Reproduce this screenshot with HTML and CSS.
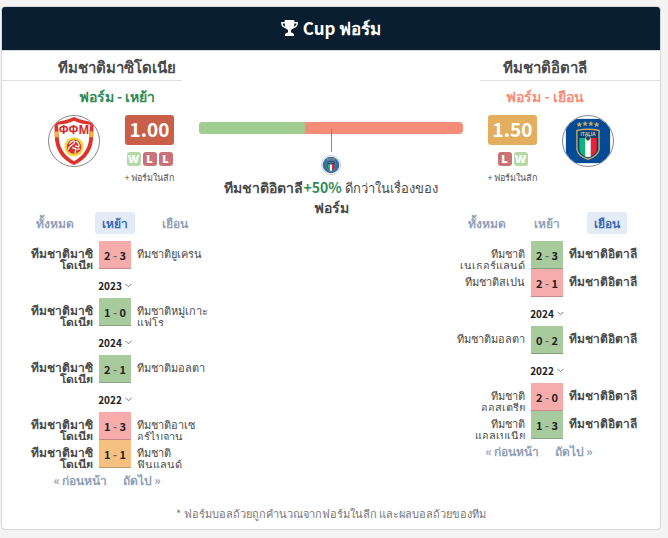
FILE: index.html
```html
<!DOCTYPE html>
<html lang="th">
  <head>
    <meta charset="utf-8">
    <title>Cup ฟอร์ม</title>
    <link rel="stylesheet" href="styles.css">
  </head>
  <body>
    <svg class="defs" width="0" height="0">
      <symbol id="chevron" viewBox="0 0 7 5">
        <path d="M0.5 0.8 L3.5 3.8 L6.5 0.8" fill="none" stroke="currentColor"/>
      </symbol>
      <symbol id="crest-italy" viewBox="0 0 52 52">
        <g fill="#c3a868">
          <path id="star" d="M17 6l.9 1.900 2 .2-1.500 1.400.4 2-1.800-1-1.800 1 .4-2-1.500-1.400 2-.2z"/>
          <use href="#star" x="6" y="-1"/>
          <use href="#star" x="12" y="-1"/>
          <use href="#star" x="18"/>
        </g>
        <path d="M14.500 15 Q26 12.500 37.500 15 V35 Q36 42 26 45 Q16 42 14.500 35 Z" fill="#0a3c78" stroke="#c3a868" stroke-width="1.500"/>
        <path d="M17 23h6v19q-5-2-6-7z" fill="#12b27c"/>
        <path d="M23 23h6v19l-3 1-3-1z" fill="#fff"/>
        <path d="M29 23h6v12q-1 5-6 7z" fill="#ee2038"/>
        <circle cx="26" cy="23" r="2.500" fill="#0a3c78" stroke="#c3a868"/>
        <text class="crest-text" x="26" y="20.500" fill="#dfca94">ITALIA</text>
      </symbol>
    </svg>

    <div class="card">
      <h2 class="card-title">
        <svg class="trophy" viewBox="0 0 17 16">
          <path d="M3.700 0h9.600v3.500q0 5-3.300 6.400V12q0 .6 1 .8Q13 13 13 15v1H4v-1q0-2 2-2.200 1-.2 1-.8V9.900Q3.700 8.500 3.700 3.500z" fill="#fff"/>
          <path d="M4 2.700H.8Q.6 7 6 8M13 2.700h3.200Q16.400 7 11 8" fill="none" stroke="#fff" stroke-width="1.400"/>
        </svg>
        Cup ฟอร์ม
      </h2>

      <div class="compare">
        <div class="team home">
          <h3 class="team-name">ทีมชาติมาซิโดเนีย</h3>
          <p class="team-side green">ฟอร์ม - เหย้า</p>
          <div class="team-summary">
            <svg class="crest" viewBox="0 0 52 52">
              <path d="M5 6Q15 6 26 1Q37 6 47 6Q46 12 46 20Q46 42 26 51Q6 42 6 20Q6 12 5 6Z" fill="#e0322c"/>
              <path d="M9 9Q17 9 26 5Q35 9 43 9Q42 14 42 20Q42 38 26 47Q10 38 10 20Q10 14 9 9Z" fill="#fff"/>
              <path d="M6 16h4v6H6zM42 16h4v6h-4z" fill="#f4b23c"/>
              <text class="crest-mark" x="26" y="19" fill="#d42a2a">ФФМ</text>
              <circle cx="26" cy="32" r="10" fill="#fbd43c"/>
              <circle cx="26" cy="32" r="7.500" fill="#d9362b"/>
              <path d="M21 29q3-4 5-3t-2 4-4 5M28 26q4 3 3 6l-4-1M24 33l4 1-1 5M29 35l3-1" fill="none" stroke="#fff" stroke-width="1.300"/>
            </svg>
            <div class="rating">
              <span class="rating-value red">1.00</span>
              <div class="results">
                <span class="result win">W</span>
                <span class="result loss">L</span>
                <span class="result loss">L</span>
              </div>
              <a class="league-link" href="#">+ ฟอร์มในลีก</a>
            </div>
          </div>
        </div>

        <div class="versus">
          <div class="bar"><div class="bar-home" style="width: 40%"></div></div>
          <div class="pointer"></div>
          <svg class="mini-crest" viewBox="0 0 52 52">
            <circle cx="26" cy="26" r="24" fill="#2f6dab"/>
            <use href="#crest-italy"/>
          </svg>
          <p class="verdict"><b>ทีมชาติอิตาลี<span class="green">+50%</span></b> ดีกว่าในเรื่องของ<br><b>ฟอร์ม</b></p>
        </div>

        <div class="team away">
          <h3 class="team-name">ทีมชาติอิตาลี</h3>
          <p class="team-side coral">ฟอร์ม - เยือน</p>
          <div class="team-summary">
            <div class="rating">
              <span class="rating-value amber">1.50</span>
              <div class="results">
                <span class="result loss">L</span>
                <span class="result win">W</span>
              </div>
              <a class="league-link" href="#">+ ฟอร์มในลีก</a>
            </div>
            <svg class="crest" viewBox="0 0 52 52">
              <rect x="3" y="3" width="46" height="46" fill="#034a97"/>
              <use href="#crest-italy"/>
            </svg>
          </div>
        </div>

        <div class="history home-history">
          <div class="tabs">
            <button class="tab">ทั้งหมด</button>
            <button class="tab active">เหย้า</button>
            <button class="tab">เยือน</button>
          </div>
          <div class="match"><b>ทีมชาติมาซิ<br>โดเนีย</b><span class="score lost">2 <i>-</i> 3</span><span>ทีมชาติยูเครน</span></div>
          <button class="year">2023 <svg><use href="#chevron"/></svg></button>
          <div class="match"><b>ทีมชาติมาซิ<br>โดเนีย</b><span class="score won">1 <i>-</i> 0</span><span>ทีมชาติหมู่เกาะ<br>แฟโร</span></div>
          <button class="year">2024 <svg><use href="#chevron"/></svg></button>
          <div class="match"><b>ทีมชาติมาซิ<br>โดเนีย</b><span class="score won">2 <i>-</i> 1</span><span>ทีมชาติมอลตา</span></div>
          <button class="year">2022 <svg><use href="#chevron"/></svg></button>
          <div class="match"><b>ทีมชาติมาซิ<br>โดเนีย</b><span class="score lost">1 <i>-</i> 3</span><span>ทีมชาติอาเซ<br>อร์ไบจาน</span></div>
          <div class="match"><b>ทีมชาติมาซิ<br>โดเนีย</b><span class="score drawn">1 <i>-</i> 1</span><span>ทีมชาติ<br>ฟินแลนด์</span></div>
          <div class="pager">
            <button>« ก่อนหน้า</button>
            <button>ถัดไป »</button>
          </div>
        </div>

        <div class="history away-history">
          <div class="tabs">
            <button class="tab">ทั้งหมด</button>
            <button class="tab">เหย้า</button>
            <button class="tab active">เยือน</button>
          </div>
          <div class="match"><span>ทีมชาติ<br>เนเธอร์แลนด์</span><span class="score won">2 <i>-</i> 3</span><b>ทีมชาติอิตาลี</b></div>
          <div class="match"><span>ทีมชาติสเปน</span><span class="score lost">2 <i>-</i> 1</span><b>ทีมชาติอิตาลี</b></div>
          <button class="year">2024 <svg><use href="#chevron"/></svg></button>
          <div class="match"><span>ทีมชาติมอลตา</span><span class="score won">0 <i>-</i> 2</span><b>ทีมชาติอิตาลี</b></div>
          <button class="year">2022 <svg><use href="#chevron"/></svg></button>
          <div class="match"><span>ทีมชาติ<br>ออสเตรีย</span><span class="score lost">2 <i>-</i> 0</span><b>ทีมชาติอิตาลี</b></div>
          <div class="match"><span>ทีมชาติ<br>แอลเบเนีย</span><span class="score won">1 <i>-</i> 3</span><b>ทีมชาติอิตาลี</b></div>
          <div class="pager">
            <button>« ก่อนหน้า</button>
            <button>ถัดไป »</button>
          </div>
        </div>
      </div>

      <p class="note">* ฟอร์มบอลถ้วยถูกคำนวณจากฟอร์มในลีก และผลบอลถ้วยของทีม</p>
    </div>
  </body>
</html>
```

FILE: styles.css
```css
* {
  box-sizing: border-box;
}

body {
  margin: 0;
  padding: 6px 7px 8px 1px;
  background: #f3f3f3;
  color: #4a4a4a;
  font-family: "Noto Sans CJK JP", "Noto Sans", sans-serif;
  font-size: 12px;
}

h2, h3, p {
  margin: 0;
}

button {
  padding: 0;
  border: 0;
  background: none;
  color: inherit;
  font: inherit;
  cursor: pointer;
}

.defs {
  position: absolute;
}

.card {
  border: 1px solid #d6d8da;
  border-radius: 4px;
  background: #fff;
  overflow: hidden;
}

.card-title {
  display: flex;
  align-items: center;
  justify-content: center;
  gap: 5px;
  height: 44px;
  padding-bottom: 2px;
  border-bottom: 1px solid #d6dade;
  background: #091e31;
  color: #fff;
  font-size: 17px;
  line-height: 24px;
}

.trophy {
  width: 17px;
  height: 16px;
}

.compare {
  display: grid;
  grid-template-columns: 180px 46px 1fr 46px 180px;
  grid-template-rows: 161px auto;
}

.team {
  text-align: center;
}

.home {
  grid-area: 1 / 1;
}

.away {
  grid-area: 1 / 5;
}

.team-name {
  height: 30px;
  border-bottom: 1px solid #e0e0e0;
  font-size: 15px;
  line-height: 32px;
}

.team-side {
  height: 34px;
  font-size: 14px;
  font-weight: bold;
  line-height: 30px;
}

.home .team-name,
.home .team-side {
  padding-left: 50px;
}

.away .team-name,
.away .team-side {
  padding-right: 50px;
}

.green {
  color: #2e8b57;
}

.coral {
  color: #f68d78;
}

.team-summary {
  display: flex;
  gap: 20px;
}

.home .team-summary {
  justify-content: flex-end;
  padding-right: 3px;
}

.away .team-summary {
  padding-left: 3px;
}

.crest {
  width: 52px;
  height: 52px;
  border: 1px solid #888;
  border-radius: 50%;
}

.crest-text {
  font: bold 5px "Open Sans", sans-serif;
  text-anchor: middle;
}

.crest-mark {
  font: bold 12px "Open Sans", sans-serif;
  text-anchor: middle;
}

.rating {
  display: flex;
  flex-direction: column;
  align-items: center;
  width: 59px;
}

.rating-value {
  width: 49px;
  height: 30px;
  border-radius: 3px;
  color: #fff;
  font-size: 19px;
  font-weight: bold;
  line-height: 28px;
}

.red {
  background: #c95f49;
}

.amber {
  background: #e3ae5e;
}

.results {
  display: flex;
  gap: 2px;
  margin: 7px 0 4px;
}

.result {
  width: 14px;
  border-radius: 3px;
  color: #fff;
  font-family: "Open Sans", sans-serif;
  font-size: 11px;
  font-weight: 800;
  line-height: 14px;
}

.win {
  background: #b3d8a4;
}

.loss {
  background: #c97376;
}

.league-link {
  color: #555;
  font-size: 9px;
  line-height: 16px;
  text-decoration: none;
  white-space: nowrap;
}

.versus {
  display: flex;
  flex-direction: column;
  align-items: center;
  grid-area: 1 / 2 / 3 / 5;
  align-self: start;
  padding: 71px 17px 0;
}

.bar {
  width: 100%;
  height: 12px;
  border-radius: 4px;
  background: #f68d78;
  overflow: hidden;
}

.bar-home {
  height: 100%;
  background: #a2cd90;
}

.pointer {
  width: 1px;
  height: 23px;
  margin-top: -5px;
  background: #888;
  z-index: 1;
}

.mini-crest {
  width: 20px;
  height: 20px;
  margin: 3px 0;
  border: 1px solid #ccc;
  border-radius: 50%;
}

.verdict {
  font-size: 13px;
  line-height: 20px;
  text-align: center;
  white-space: nowrap;
}

.verdict b {
  font-size: 14px;
  line-height: 16px;
}

.home-history {
  grid-area: 2 / 1 / 3 / 3;
}

.away-history {
  grid-area: 2 / 4 / 3 / 6;
}

.tabs {
  display: grid;
  grid-template-columns: repeat(3, 60px);
  justify-content: center;
  justify-items: center;
  margin-bottom: 7px;
  color: #8fa1b8;
}

.tab {
  padding: 0 7px;
  border-radius: 3px;
  font-weight: bold;
  line-height: 22px;
}

.active {
  background: #e3ebf6;
  color: #3c69b5;
}

.match {
  display: grid;
  grid-template-columns: 1fr 32px 1fr;
  column-gap: 6px;
  height: 28px;
  font-size: 11px;
  line-height: 12px;
  white-space: nowrap;
}

.match > * {
  height: 28px;
  padding-top: 6px;
  overflow: hidden;
}

.match > b {
  font-size: 12px;
}

.match > :first-child {
  text-align: right;
}

.match > .score {
  padding: 0;
  border-bottom: 1px solid rgba(0, 0, 0, .2);
  color: #222;
  font-weight: bold;
  line-height: 28px;
  text-align: center;
}

.score i {
  color: #666;
  font-style: normal;
}

.match > .won {
  background: #a8cb9e;
}

.match > .lost {
  background: #f6acaa;
}

.match > .drawn {
  background: #f5c080;
}

.year {
  display: flex;
  align-items: center;
  justify-content: center;
  gap: 3px;
  width: 100%;
  height: 29px;
  padding-top: 4px;
  color: #222;
  font-size: 10px;
  font-weight: bold;
}

.year svg {
  width: 7px;
  height: 5px;
  color: #777;
}

.pager {
  display: flex;
  justify-content: center;
  gap: 15px;
  padding-right: 16px;
  color: #8fa1b8;
  font-size: 12px;
  font-weight: bold;
  line-height: 24px;
}

.note {
  padding: 10px 0 5px;
  color: #777;
  font-size: 11px;
  line-height: 22px;
  text-align: center;
}
```
